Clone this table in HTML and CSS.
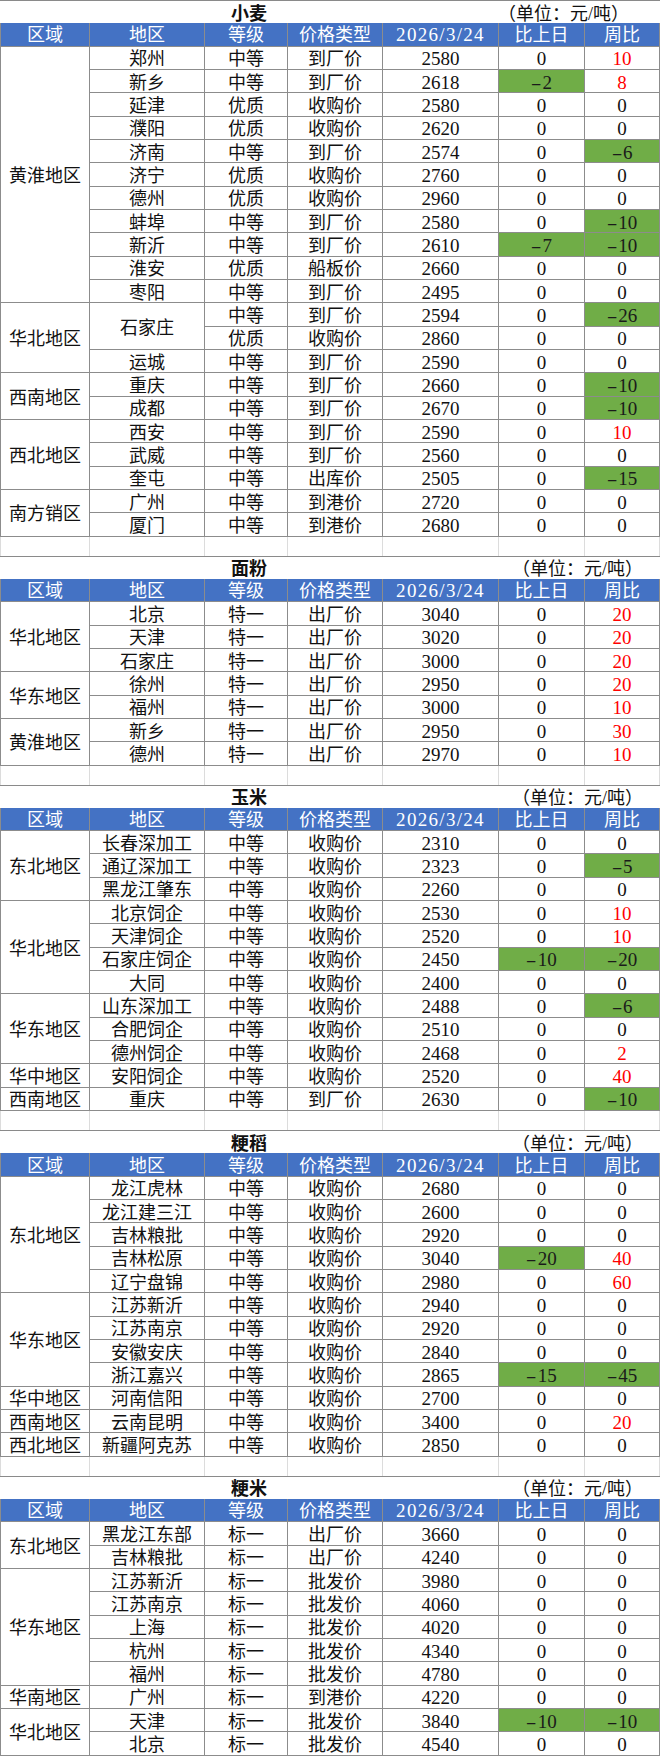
FILE: index.html
```html
<!DOCTYPE html>
<html lang="zh-CN">
<head>
<meta charset="utf-8">
<title>粮油价格</title>
<link rel="stylesheet" href="styles.css">
</head>
<body>
<div class="sheet">

  <section class="block">
    <div class="title"><div class="t-name">小麦</div><div class="t-unit t-unit-left">（单位：元/吨）</div></div>
    <div class="grid">
      <div class="c h">区域</div><div class="c h">地区</div><div class="c h">等级</div><div class="c h">价格类型</div><div class="c h n date">2026/3/24</div><div class="c h">比上日</div><div class="c h">周比</div>
      <div class="c rg s11">黄淮地区</div>
      <div class="c">郑州</div><div class="c">中等</div><div class="c">到厂价</div><div class="c n">2580</div><div class="c n">0</div><div class="c n r">10</div>
      <div class="c">新乡</div><div class="c">中等</div><div class="c">到厂价</div><div class="c n">2618</div><div class="c n g"><span class="m">-</span>2</div><div class="c n r">8</div>
      <div class="c">延津</div><div class="c">优质</div><div class="c">收购价</div><div class="c n">2580</div><div class="c n">0</div><div class="c n">0</div>
      <div class="c">濮阳</div><div class="c">优质</div><div class="c">收购价</div><div class="c n">2620</div><div class="c n">0</div><div class="c n">0</div>
      <div class="c">济南</div><div class="c">中等</div><div class="c">到厂价</div><div class="c n">2574</div><div class="c n">0</div><div class="c n g"><span class="m">-</span>6</div>
      <div class="c">济宁</div><div class="c">优质</div><div class="c">收购价</div><div class="c n">2760</div><div class="c n">0</div><div class="c n">0</div>
      <div class="c">德州</div><div class="c">优质</div><div class="c">收购价</div><div class="c n">2960</div><div class="c n">0</div><div class="c n">0</div>
      <div class="c">蚌埠</div><div class="c">中等</div><div class="c">到厂价</div><div class="c n">2580</div><div class="c n">0</div><div class="c n g"><span class="m">-</span>10</div>
      <div class="c">新沂</div><div class="c">中等</div><div class="c">到厂价</div><div class="c n">2610</div><div class="c n g"><span class="m">-</span>7</div><div class="c n g"><span class="m">-</span>10</div>
      <div class="c">淮安</div><div class="c">优质</div><div class="c">船板价</div><div class="c n">2660</div><div class="c n">0</div><div class="c n">0</div>
      <div class="c">枣阳</div><div class="c">中等</div><div class="c">到厂价</div><div class="c n">2495</div><div class="c n">0</div><div class="c n">0</div>
      <div class="c rg s3">华北地区</div>
      <div class="c s2">石家庄</div><div class="c">中等</div><div class="c">到厂价</div><div class="c n">2594</div><div class="c n">0</div><div class="c n g"><span class="m">-</span>26</div>
      <div class="c">优质</div><div class="c">收购价</div><div class="c n">2860</div><div class="c n">0</div><div class="c n">0</div>
      <div class="c">运城</div><div class="c">中等</div><div class="c">到厂价</div><div class="c n">2590</div><div class="c n">0</div><div class="c n">0</div>
      <div class="c rg s2">西南地区</div>
      <div class="c">重庆</div><div class="c">中等</div><div class="c">到厂价</div><div class="c n">2660</div><div class="c n">0</div><div class="c n g"><span class="m">-</span>10</div>
      <div class="c">成都</div><div class="c">中等</div><div class="c">到厂价</div><div class="c n">2670</div><div class="c n">0</div><div class="c n g"><span class="m">-</span>10</div>
      <div class="c rg s3">西北地区</div>
      <div class="c">西安</div><div class="c">中等</div><div class="c">到厂价</div><div class="c n">2590</div><div class="c n">0</div><div class="c n r">10</div>
      <div class="c">武威</div><div class="c">中等</div><div class="c">到厂价</div><div class="c n">2560</div><div class="c n">0</div><div class="c n">0</div>
      <div class="c">奎屯</div><div class="c">中等</div><div class="c">出库价</div><div class="c n">2505</div><div class="c n">0</div><div class="c n g"><span class="m">-</span>15</div>
      <div class="c rg s2">南方销区</div>
      <div class="c">广州</div><div class="c">中等</div><div class="c">到港价</div><div class="c n">2720</div><div class="c n">0</div><div class="c n">0</div>
      <div class="c">厦门</div><div class="c">中等</div><div class="c">到港价</div><div class="c n">2680</div><div class="c n">0</div><div class="c n">0</div>
    </div>
  </section>

  <div class="blank"><div></div><div></div><div></div><div></div><div></div><div></div><div></div></div>

  <section class="block">
    <div class="title"><div class="t-name">面粉</div><div class="t-unit">（单位：元/吨）</div></div>
    <div class="grid">
      <div class="c h">区域</div><div class="c h">地区</div><div class="c h">等级</div><div class="c h">价格类型</div><div class="c h n date">2026/3/24</div><div class="c h">比上日</div><div class="c h">周比</div>
      <div class="c rg s3">华北地区</div>
      <div class="c">北京</div><div class="c">特一</div><div class="c">出厂价</div><div class="c n">3040</div><div class="c n">0</div><div class="c n r">20</div>
      <div class="c">天津</div><div class="c">特一</div><div class="c">出厂价</div><div class="c n">3020</div><div class="c n">0</div><div class="c n r">20</div>
      <div class="c">石家庄</div><div class="c">特一</div><div class="c">出厂价</div><div class="c n">3000</div><div class="c n">0</div><div class="c n r">20</div>
      <div class="c rg s2">华东地区</div>
      <div class="c">徐州</div><div class="c">特一</div><div class="c">出厂价</div><div class="c n">2950</div><div class="c n">0</div><div class="c n r">20</div>
      <div class="c">福州</div><div class="c">特一</div><div class="c">出厂价</div><div class="c n">3000</div><div class="c n">0</div><div class="c n r">10</div>
      <div class="c rg s2">黄淮地区</div>
      <div class="c">新乡</div><div class="c">特一</div><div class="c">出厂价</div><div class="c n">2950</div><div class="c n">0</div><div class="c n r">30</div>
      <div class="c">德州</div><div class="c">特一</div><div class="c">出厂价</div><div class="c n">2970</div><div class="c n">0</div><div class="c n r">10</div>
    </div>
  </section>

  <div class="blank"><div></div><div></div><div></div><div></div><div></div><div></div><div></div></div>

  <section class="block">
    <div class="title"><div class="t-name">玉米</div><div class="t-unit">（单位：元/吨）</div></div>
    <div class="grid">
      <div class="c h">区域</div><div class="c h">地区</div><div class="c h">等级</div><div class="c h">价格类型</div><div class="c h n date">2026/3/24</div><div class="c h">比上日</div><div class="c h">周比</div>
      <div class="c rg s3">东北地区</div>
      <div class="c">长春深加工</div><div class="c">中等</div><div class="c">收购价</div><div class="c n">2310</div><div class="c n">0</div><div class="c n">0</div>
      <div class="c">通辽深加工</div><div class="c">中等</div><div class="c">收购价</div><div class="c n">2323</div><div class="c n">0</div><div class="c n g"><span class="m">-</span>5</div>
      <div class="c">黑龙江肇东</div><div class="c">中等</div><div class="c">收购价</div><div class="c n">2260</div><div class="c n">0</div><div class="c n">0</div>
      <div class="c rg s4">华北地区</div>
      <div class="c">北京饲企</div><div class="c">中等</div><div class="c">收购价</div><div class="c n">2530</div><div class="c n">0</div><div class="c n r">10</div>
      <div class="c">天津饲企</div><div class="c">中等</div><div class="c">收购价</div><div class="c n">2520</div><div class="c n">0</div><div class="c n r">10</div>
      <div class="c">石家庄饲企</div><div class="c">中等</div><div class="c">收购价</div><div class="c n">2450</div><div class="c n g"><span class="m">-</span>10</div><div class="c n g"><span class="m">-</span>20</div>
      <div class="c">大同</div><div class="c">中等</div><div class="c">收购价</div><div class="c n">2400</div><div class="c n">0</div><div class="c n">0</div>
      <div class="c rg s3">华东地区</div>
      <div class="c">山东深加工</div><div class="c">中等</div><div class="c">收购价</div><div class="c n">2488</div><div class="c n">0</div><div class="c n g"><span class="m">-</span>6</div>
      <div class="c">合肥饲企</div><div class="c">中等</div><div class="c">收购价</div><div class="c n">2510</div><div class="c n">0</div><div class="c n">0</div>
      <div class="c">德州饲企</div><div class="c">中等</div><div class="c">收购价</div><div class="c n">2468</div><div class="c n">0</div><div class="c n r">2</div>
      <div class="c rg">华中地区</div>
      <div class="c">安阳饲企</div><div class="c">中等</div><div class="c">收购价</div><div class="c n">2520</div><div class="c n">0</div><div class="c n r">40</div>
      <div class="c rg">西南地区</div>
      <div class="c">重庆</div><div class="c">中等</div><div class="c">到厂价</div><div class="c n">2630</div><div class="c n">0</div><div class="c n g"><span class="m">-</span>10</div>
    </div>
  </section>

  <div class="blank"><div></div><div></div><div></div><div></div><div></div><div></div><div></div></div>

  <section class="block">
    <div class="title"><div class="t-name">粳稻</div><div class="t-unit">（单位：元/吨）</div></div>
    <div class="grid">
      <div class="c h">区域</div><div class="c h">地区</div><div class="c h">等级</div><div class="c h">价格类型</div><div class="c h n date">2026/3/24</div><div class="c h">比上日</div><div class="c h">周比</div>
      <div class="c rg s5">东北地区</div>
      <div class="c">龙江虎林</div><div class="c">中等</div><div class="c">收购价</div><div class="c n">2680</div><div class="c n">0</div><div class="c n">0</div>
      <div class="c">龙江建三江</div><div class="c">中等</div><div class="c">收购价</div><div class="c n">2600</div><div class="c n">0</div><div class="c n">0</div>
      <div class="c">吉林粮批</div><div class="c">中等</div><div class="c">收购价</div><div class="c n">2920</div><div class="c n">0</div><div class="c n">0</div>
      <div class="c">吉林松原</div><div class="c">中等</div><div class="c">收购价</div><div class="c n">3040</div><div class="c n g"><span class="m">-</span>20</div><div class="c n r">40</div>
      <div class="c">辽宁盘锦</div><div class="c">中等</div><div class="c">收购价</div><div class="c n">2980</div><div class="c n">0</div><div class="c n r">60</div>
      <div class="c rg s4">华东地区</div>
      <div class="c">江苏新沂</div><div class="c">中等</div><div class="c">收购价</div><div class="c n">2940</div><div class="c n">0</div><div class="c n">0</div>
      <div class="c">江苏南京</div><div class="c">中等</div><div class="c">收购价</div><div class="c n">2920</div><div class="c n">0</div><div class="c n">0</div>
      <div class="c">安徽安庆</div><div class="c">中等</div><div class="c">收购价</div><div class="c n">2840</div><div class="c n">0</div><div class="c n">0</div>
      <div class="c">浙江嘉兴</div><div class="c">中等</div><div class="c">收购价</div><div class="c n">2865</div><div class="c n g"><span class="m">-</span>15</div><div class="c n g"><span class="m">-</span>45</div>
      <div class="c rg">华中地区</div>
      <div class="c">河南信阳</div><div class="c">中等</div><div class="c">收购价</div><div class="c n">2700</div><div class="c n">0</div><div class="c n">0</div>
      <div class="c rg">西南地区</div>
      <div class="c">云南昆明</div><div class="c">中等</div><div class="c">收购价</div><div class="c n">3400</div><div class="c n">0</div><div class="c n r">20</div>
      <div class="c rg">西北地区</div>
      <div class="c">新疆阿克苏</div><div class="c">中等</div><div class="c">收购价</div><div class="c n">2850</div><div class="c n">0</div><div class="c n">0</div>
    </div>
  </section>

  <div class="blank"><div></div><div></div><div></div><div></div><div></div><div></div><div></div></div>

  <section class="block">
    <div class="title"><div class="t-name">粳米</div><div class="t-unit">（单位：元/吨）</div></div>
    <div class="grid">
      <div class="c h">区域</div><div class="c h">地区</div><div class="c h">等级</div><div class="c h">价格类型</div><div class="c h n date">2026/3/24</div><div class="c h">比上日</div><div class="c h">周比</div>
      <div class="c rg s2">东北地区</div>
      <div class="c">黑龙江东部</div><div class="c">标一</div><div class="c">出厂价</div><div class="c n">3660</div><div class="c n">0</div><div class="c n">0</div>
      <div class="c">吉林粮批</div><div class="c">标一</div><div class="c">出厂价</div><div class="c n">4240</div><div class="c n">0</div><div class="c n">0</div>
      <div class="c rg s5">华东地区</div>
      <div class="c">江苏新沂</div><div class="c">标一</div><div class="c">批发价</div><div class="c n">3980</div><div class="c n">0</div><div class="c n">0</div>
      <div class="c">江苏南京</div><div class="c">标一</div><div class="c">批发价</div><div class="c n">4060</div><div class="c n">0</div><div class="c n">0</div>
      <div class="c">上海</div><div class="c">标一</div><div class="c">批发价</div><div class="c n">4020</div><div class="c n">0</div><div class="c n">0</div>
      <div class="c">杭州</div><div class="c">标一</div><div class="c">批发价</div><div class="c n">4340</div><div class="c n">0</div><div class="c n">0</div>
      <div class="c">福州</div><div class="c">标一</div><div class="c">批发价</div><div class="c n">4780</div><div class="c n">0</div><div class="c n">0</div>
      <div class="c rg">华南地区</div>
      <div class="c">广州</div><div class="c">标一</div><div class="c">到港价</div><div class="c n">4220</div><div class="c n">0</div><div class="c n">0</div>
      <div class="c rg s2">华北地区</div>
      <div class="c">天津</div><div class="c">标一</div><div class="c">批发价</div><div class="c n">3840</div><div class="c n g"><span class="m">-</span>10</div><div class="c n g"><span class="m">-</span>10</div>
      <div class="c">北京</div><div class="c">标一</div><div class="c">批发价</div><div class="c n">4540</div><div class="c n">0</div><div class="c n">0</div>
    </div>
  </section>

</div>
</body>
</html>
```

FILE: styles.css
```css
html, body {
  margin: 0;
  padding: 0;
  background: #ffffff;
  overflow: hidden;
}

.sheet {
  width: 660px;
  font-family: "Liberation Serif", "Noto Sans CJK SC", serif;
  font-size: 18px;
  color: #111111;
}

.title {
  box-sizing: border-box;
  height: 23.333px;
  border-top: 1px solid #8a8a8a;
  display: flex;
  align-items: center;
}

.t-name {
  width: 498px;
  text-align: center;
  font-weight: bold;
  font-size: 18px;
  line-height: 22px;
  padding-top: 3px;
}

.t-unit {
  flex: 1;
  padding-left: 14px;
  font-size: 18px;
  line-height: 22px;
  padding-top: 3px;
  white-space: nowrap;
}

.t-unit-left {
  padding-left: 0;
}

.grid {
  display: grid;
  grid-template-columns: 88px 114px 82px 94px 115px 85px 1fr;
  grid-auto-rows: 22.333px;
  gap: 1px;
  padding: 0 1px 1px 1px;
  background: #8c8c8c;
}

.c {
  background: #ffffff;
  display: flex;
  align-items: center;
  justify-content: center;
  line-height: 20px;
  padding-top: 3px;
  box-sizing: border-box;
  white-space: nowrap;
  overflow: hidden;
}

.h {
  background: #4472c4;
  color: #ffffff;
  padding-top: 2px;
}

.n {
  font-size: 19px;
}

.date {
  letter-spacing: 1.3px;
}

.m {
  display: inline-block;
  transform: scaleX(1.7);
  margin: 0 3px 0 2px;
}

.g {
  background: #70ad47;
  color: #1a1a1a;
}

.r {
  color: #ff0000;
}

.s2 { grid-row: span 2; }
.s3 { grid-row: span 3; }
.s4 { grid-row: span 4; }
.s5 { grid-row: span 5; }
.s11 { grid-row: span 11; }

.blank {
  display: grid;
  grid-template-columns: 88px 114px 82px 94px 115px 85px 1fr;
  grid-template-rows: 19px;
  column-gap: 1px;
  padding: 0 1px;
  background: #dcdcdc;
}

.blank > div {
  background: #ffffff;
}
```
